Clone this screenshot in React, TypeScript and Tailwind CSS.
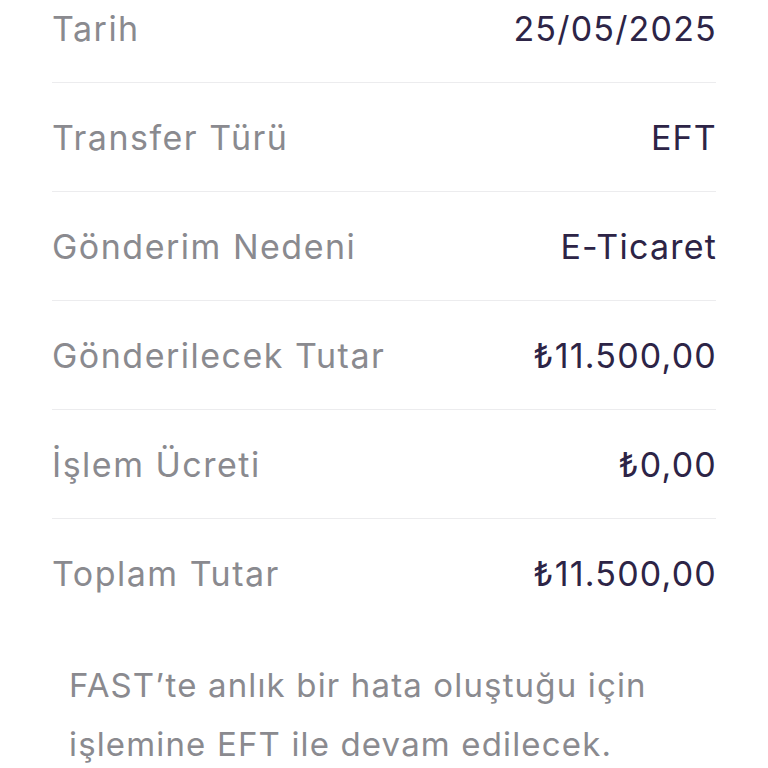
import React from 'react';

const rows = [
  { label: 'Tarih', value: '25/05/2025' },
  { label: 'Transfer Türü', value: 'EFT' },
  { label: 'Gönderim Nedeni', value: 'E-Ticaret' },
  { label: 'Gönderilecek Tutar', value: '₺11.500,00' },
  { label: 'İşlem Ücreti', value: '₺0,00' },
  { label: 'Toplam Tutar', value: '₺11.500,00' },
];

export default function App() {
  return (
    <div className="w-[768px] h-[768px] overflow-hidden bg-white font-['Inter','Noto_Sans',sans-serif]">
      <div className="-mt-[26px] px-[52px]">
        {rows.map((r, i) => (
          <div
            key={r.label}
            className={`flex items-center justify-between h-[109px] ${i < rows.length - 1 ? 'border-b border-[#ececee]' : ''}`}
          >
            <span className="text-[34px] text-[#8a8a8f] tracking-[1.5px]">{r.label}</span>
            <span className="-mr-[1px] text-[34px] text-[#2d2446] tracking-[1.2px]">{r.value}</span>
          </div>
        ))}
      </div>
      <p className="mt-[28px] px-[69px] text-[33px] leading-[59px] text-[#8a8a8f] tracking-[1.15px]">
        FAST’te anlık bir hata oluştuğu için işlemine EFT ile devam edilecek.
      </p>
    </div>
  );
}
